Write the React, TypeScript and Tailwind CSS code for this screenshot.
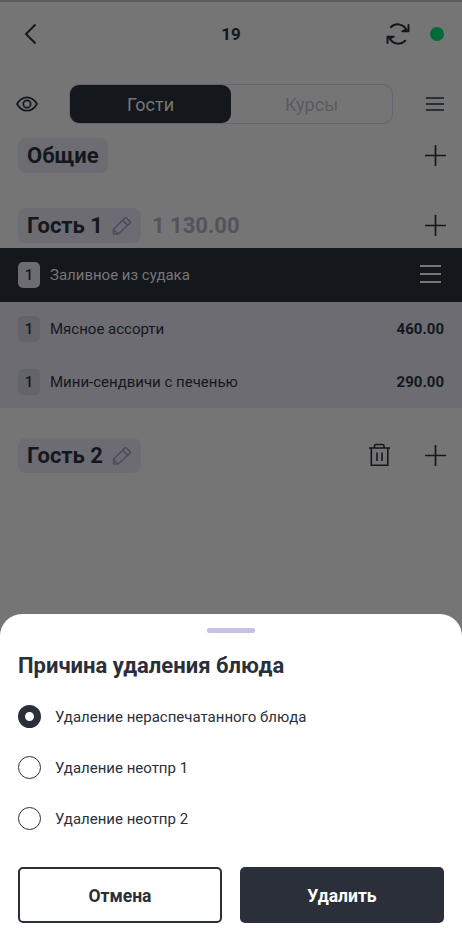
import { useState } from "react";

const GUEST_ITEMS = [
  { name: "Заливное из судака", count: 1, price: "380.00", selected: true },
  { name: "Мясное ассорти", count: 1, price: "460.00", selected: false },
  { name: "Мини-сендвичи с печенью", count: 1, price: "290.00", selected: false },
];

const REASONS = [
  "Удаление нераспечатанного блюда",
  "Удаление неотпр 1",
  "Удаление неотпр 2",
];

function PlusIcon() {
  return (
    <svg width="21" height="21" viewBox="0 0 21 21" fill="none" stroke="#14181d" strokeWidth="1.7">
      <path d="M10.500 0v21M0 10.500h21" />
    </svg>
  );
}

function PencilIcon() {
  return (
    <svg width="20" height="20" viewBox="0 0 20 20" fill="none" stroke="#4b4b5c" strokeWidth="1.500" strokeLinejoin="round">
      <path d="M1.500 18v-4.500L12.600 2.200q1-1 2 0l3.200 3.200q1 1 0 2L6.200 18z" />
      <path d="M10.600 4.200l5.200 5.200M1.500 13.800l4.500 4.200" />
    </svg>
  );
}

function TrashIcon() {
  return (
    <svg className="mb-0.5" width="21" height="24" viewBox="0 0 21 24" fill="none" stroke="#14181d" strokeWidth="1.6">
      <path d="M0 5h21M5.500 5V3q0-1.500 1.500-1.500h6.500Q15 1.500 15 3v2M2.300 5v17.200h16.500V5M8 9.500v8.500M13 9.500v8.500" />
    </svg>
  );
}

function GuestBadge({ name, editable = true }: { name: string; editable?: boolean }) {
  return (
    <div className="flex h-[35px] items-center gap-[9px] rounded-lg bg-[#6d6c73] px-[9px] text-[22px] font-bold">
      <span>{name}</span>
      {editable && <PencilIcon />}
    </div>
  );
}

export default function App() {
  const [reason, setReason] = useState(0);

  return (
    <div className="flex h-[939px] w-full flex-col overflow-hidden bg-[#757575] font-['Roboto',sans-serif] text-[#14181d]">
      <div className="h-0.5 shrink-0 bg-[#5c5c5c]" />

      {/* Header */}
      <header className="grid h-16 shrink-0 grid-cols-3 items-center px-[18px]">
        <svg className="ml-1.5" width="14" height="22" viewBox="0 0 14 22" fill="none" stroke="#14181d" strokeWidth="2">
          <path d="M11.500 1.500L2 11l9.500 9.500" />
        </svg>
        <span className="pt-px text-center text-[17px] font-bold">19</span>
        <div className="flex items-center justify-end gap-5">
          <svg width="24" height="24" viewBox="0 0 24 24" fill="none" stroke="#14181d" strokeWidth="2" strokeLinecap="round" strokeLinejoin="round">
            <path d="M4.800 5.200A9.700 9.700 0 0 1 20.300 7.500M22.500 3v6.300h-6.200L20.300 7.500M19.200 18.800A9.700 9.700 0 0 1 3.700 16.500M1.500 21v-6.300h6.200L3.700 16.500" />
          </svg>
          <span className="size-[14px] rounded-full bg-[#006b3a]" />
        </div>
      </header>

      {/* View switch */}
      <div className="mt-[18px] flex h-10 shrink-0 items-center justify-between pr-[18px] pl-4">
        <svg width="22" height="16" viewBox="0 0 22 16" fill="none" stroke="#14181d" strokeWidth="1.700">
          <path d="M1 8q4-6.700 10-6.700T21 8q-4 6.700-10 6.700T1 8z" />
          <circle cx="11" cy="8" r="3.700" />
        </svg>
        <div className="mr-0.5 flex h-10 w-[324px] rounded-[10px] border border-[#66656f] text-[18px]">
          <button className="w-[161px] rounded-[9px] bg-[#14181d] text-[#777]">Гости</button>
          <button className="flex-1 text-[#5a5963]">Курсы</button>
        </div>
        <svg width="18" height="14" viewBox="0 0 18 14" stroke="#14181d" strokeWidth="1.700">
          <path d="M0 1h18M0 7h18M0 13h18" />
        </svg>
      </div>

      <div className="mt-[14px] flex shrink-0 items-center justify-between pr-4 pl-[18px]">
        <GuestBadge name="Общие" editable={false} />
        <PlusIcon />
      </div>

      <div className="mt-[34px] flex shrink-0 items-center justify-between pr-4 pl-[18px]">
        <div className="flex items-center gap-[11px] pt-px">
          <GuestBadge name="Гость 1" />
          <span className="text-[22px] font-bold text-[#54535d]">1 130.00</span>
        </div>
        <PlusIcon />
      </div>

      <ul className="mt-[5px] shrink-0">
        {GUEST_ITEMS.map((item) => (
          <li
            key={item.name}
            className={[
              "flex items-center px-[18px]",
              item.selected ? "h-[54px] bg-[#14181d] text-[#777]" : "h-[53px] bg-[#6d6c73] pt-px",
            ].join(" ")}
          >
            <span
              className={[
                "flex h-[26px] w-[22px] items-center justify-center rounded-[5px] text-[15px] font-medium text-[#14181d]",
                item.selected ? "bg-[#6d6c73]" : "bg-[#626469]",
              ].join(" ")}
            >
              {item.count}
            </span>
            <span className="ml-[10px] flex-1 pt-px text-[15px]">{item.name}</span>
            {item.selected ? (
              <svg className="mr-[3px] mb-[3px]" width="21" height="20" viewBox="0 0 21 20" stroke="#777" strokeWidth="2">
                <path d="M0 2h21M0 10h21M0 18h21" />
              </svg>
            ) : (
              <span className="pt-px text-[15px] font-bold">{item.price}</span>
            )}
          </li>
        ))}
      </ul>

      <div className="mt-[30px] flex shrink-0 items-center justify-between pr-4 pl-[18px]">
        <GuestBadge name="Гость 2" />
        <div className="flex items-center gap-[35px]">
          <TrashIcon />
          <PlusIcon />
        </div>
      </div>

      {/* Bottom sheet */}
      <section className="mt-auto flex h-[325px] shrink-0 flex-col rounded-t-[22px] bg-white px-[18px] pt-[14px] text-[#2b2f3a]">
        <div className="h-[5px] w-12 self-center rounded-[2px] bg-[#c1c3e0]" />
        <h2 className="mt-[18px] text-[22px] leading-[30px] font-bold">Причина удаления блюда</h2>
        <div className="mt-[10px] flex flex-col">
          {REASONS.map((label, i) => (
            <button key={label} onClick={() => setReason(i)} className="flex h-[51px] items-center gap-[14px] text-left text-[15px]">
              <span
                className={[
                  "size-[23px] rounded-full border-[#2b2f3a]",
                  reason === i ? "border-[7px]" : "border-[1.5px]",
                ].join(" ")}
              />
              <span className="pt-0.5">{label}</span>
            </button>
          ))}
        </div>
        <div className="mt-[23px] grid grid-cols-2 gap-[18px] text-[17.5px] font-bold">
          <button className="h-14 rounded-[5px] border-2 border-[#2b2f3a] pt-0.5">Отмена</button>
          <button className="h-14 rounded-[5px] bg-[#2b2f3a] pt-0.5 text-white">Удалить</button>
        </div>
      </section>
    </div>
  );
}
